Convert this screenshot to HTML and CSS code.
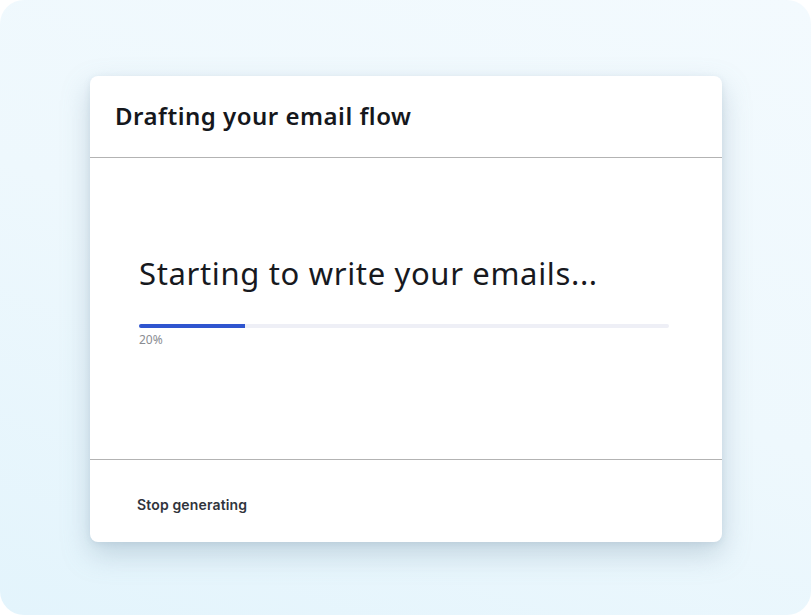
FILE: index.html
```html
<html>
  <head>
    <title>Drafting your email flow</title>
    <meta name="viewport" content="width=device-width, initial-scale=1.0" />
    <link rel="stylesheet" href="styles.css">
  </head>
  <body>
    <div class="frame">
      <div class="card">
        <div class="card-header">
          <h1>Drafting your email flow</h1>
        </div>
        <div class="card-body">
          <h2>Starting to write your emails...</h2>
          <div class="progress">
            <div class="progress-fill" style="width: 20%"></div>
          </div>
          <div class="progress-label">20%</div>
        </div>
        <div class="card-footer">
          <button class="stop-button" type="button">Stop generating</button>
        </div>
      </div>
    </div>
  </body>
</html>
```

FILE: styles.css
```css
html,
body {
  margin: 0;
  padding: 0;
  background: #ffffff;
}

.frame {
  box-sizing: border-box;
  width: 811px;
  height: 615px;
  padding: 76px 89px 0 90px;
  border-radius: 24px;
  background: linear-gradient(200deg, #f3fafe 0%, #eef8fd 50%, #e3f4fc 100%);
  overflow: hidden;
}

.card {
  width: 632px;
  height: 466px;
  background: #ffffff;
  border-radius: 8px;
  box-shadow: 0 12px 28px rgba(120, 150, 170, 0.35),
    0 2px 6px rgba(120, 150, 170, 0.15);
  display: flex;
  flex-direction: column;
  overflow: hidden;
}

.card-header {
  height: 81px;
  border-bottom: 1px solid #b3b3b3;
  display: flex;
  align-items: center;
  padding: 0 0 3px 25px;
  box-sizing: border-box;
  height: 82px;
}

h1 {
  margin: 0;
  font-family: "Noto Sans", sans-serif;
  font-weight: 600;
  font-size: 24px;
  letter-spacing: 0.5px;
  color: #15171c;
}

.card-body {
  height: 302px;
  border-bottom: 1px solid #b3b3b3;
  padding: 95px 53px 0 49px;
  box-sizing: border-box;
}

h2 {
  margin: 0;
  font-family: "Noto Sans", sans-serif;
  font-weight: 400;
  font-size: 31px;
  line-height: 40px;
  letter-spacing: 0.65px;
  color: #17191e;
}

.progress {
  margin-top: 31px;
  height: 4px;
  border-radius: 2px;
  background: #eeeff6;
  overflow: hidden;
}

.progress-fill {
  height: 100%;
  background: #2f55cf;
}

.progress-label {
  margin-top: 5px;
  font-family: "Noto Sans", sans-serif;
  font-size: 12px;
  line-height: 14px;
  color: #8a8c92;
}

.card-footer {
  flex: 1;
  display: flex;
  align-items: center;
  padding: 6px 0 0 47px;
}

.stop-button {
  border: none;
  background: none;
  padding: 0;
  font-family: "Inter", sans-serif;
  font-weight: 600;
  font-size: 14px;
  letter-spacing: 0.15px;
  color: #30343c;
  cursor: pointer;
}
```
